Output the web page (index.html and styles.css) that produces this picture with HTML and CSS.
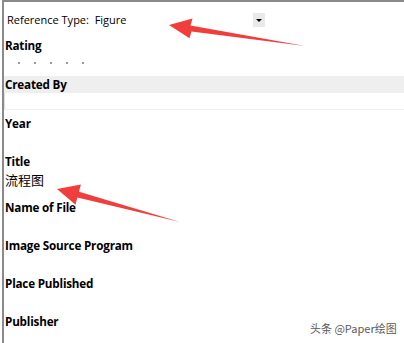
FILE: index.html
```html
<!DOCTYPE html>
<html>
<head>
<meta charset="utf-8">
<link rel="stylesheet" href="styles.css">
</head>
<body>
<div class="pane">
  <div class="reftype">
    <span class="reftype-text">Reference Type:&nbsp; Figure</span>
    <span class="dd-btn"><span class="tri"></span></span>
  </div>
  <div class="field field-rating">
    <div class="label">Rating</div>
    <div class="dots"><i></i><i></i><i></i><i></i><i></i></div>
  </div>
  <div class="field field-created">
    <div class="label">Created By</div>
    <div class="input-box"></div>
  </div>
  <div class="field">
    <div class="label">Year</div>
  </div>
  <div class="field field-title">
    <div class="label">Title</div>
    <div class="value cjk">流程图</div>
  </div>
  <div class="field">
    <div class="label">Name of File</div>
  </div>
  <div class="field">
    <div class="label">Image Source Program</div>
  </div>
  <div class="field">
    <div class="label">Place Published</div>
  </div>
  <div class="field">
    <div class="label">Publisher</div>
  </div>
</div>
<div class="watermark">头条 @Paper绘图</div>
<svg class="arrows" width="404" height="343" viewBox="0 0 404 343">
  <polygon points="169,25 192.5,18.5 190.5,25.4 305,46 191.5,31.4 189.5,38.3" fill="#f23d3d"/>
  <polygon points="57,189 80.9,184.6 79,191.8 180,222 77.4,197.6 75.5,204.8" fill="#f23d3d"/>
</svg>
</body>
</html>
```

FILE: styles.css
```css
html, body {
  margin: 0;
  padding: 0;
  background: #ffffff;
}
body {
  width: 404px;
  height: 343px;
  overflow: hidden;
  position: relative;
  font-family: "Open Sans", "Noto Sans", sans-serif;
  color: #000;
}
.pane {
  margin-left: 2px;
  height: 341px;
  overflow: hidden;
  border-top: 2px solid #8a8a8a;
  border-left: 2px solid #8a8a8a;
  display: flex;
  flex-direction: column;
}
.reftype {
  flex: none;
  height: 35px;
  box-sizing: border-box;
  padding: 9px 0 0 3px;
  display: flex;
  align-items: flex-start;
  font-size: 11px;
  line-height: 17px;
}
.reftype-text {
  width: 246px;
  flex: none;
}
.dd-btn {
  width: 12px;
  height: 14px;
  margin-top: 2px;
  background: #e9e9e9;
  display: flex;
  align-items: center;
  justify-content: center;
}
.tri {
  width: 0;
  height: 0;
  border-left: 3px solid transparent;
  border-right: 3px solid transparent;
  border-top: 3px solid #000;
}
.field {
  height: 38px;
  flex: none;
  padding-left: 1px;
}
.label {
  font-weight: 700;
  font-size: 11.7px;
  line-height: 17px;
  letter-spacing: -0.2px;
}
.field-rating {
  height: 39px;
}
.dots {
  display: flex;
  gap: 14px;
  padding: 8px 0 0 13px;
}
.dots i {
  width: 2px;
  height: 2px;
  background: #9a9a9a;
  display: block;
}
.field-created {
  height: 34px;
  margin-bottom: 5px;
  background: #efefef;
  padding-left: 0;
}
.field-created .label {
  padding-left: 1px;
}
.input-box {
  height: 16px;
  background: #fff;
  border-left: 1px solid #dedede;
}
.field-title {
  height: 46px;
}
.value {
  font-size: 13px;
  line-height: 20px;
}
.cjk {
  font-family: "Noto Sans CJK SC", sans-serif;
}
.watermark {
  position: absolute;
  left: 310px;
  top: 320px;
  font-family: "Noto Sans CJK SC", sans-serif;
  font-size: 11px;
  line-height: 16px;
  color: #5a5a5a;
}
.arrows {
  position: absolute;
  left: 0;
  top: 0;
}
```
